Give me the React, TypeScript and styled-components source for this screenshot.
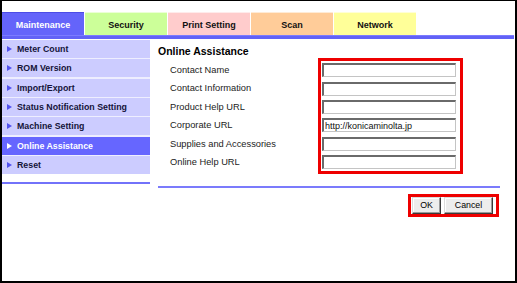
import styled, { createGlobalStyle } from 'styled-components';

const GlobalStyle = createGlobalStyle`
  html, body {
    margin: 0;
    padding: 0;
    background: #ffffff;
  }
  body {
    font-family: "Liberation Sans", Arial, sans-serif;
  }
`;

const Frame = styled.div`
  box-sizing: border-box;
  width: 517px;
  height: 283px;
  border-style: solid;
  border-color: #000;
  border-width: 1px 2px 2px 2px;
  padding: 11px 1px 0 0;
  background: #fff;
  display: flex;
  flex-direction: column;
`;

const TabRow = styled.div`
  display: flex;
  gap: 1px;
  height: 23px;
`;

const Tab = styled.div<{ $bg: string; $active?: boolean }>`
  box-sizing: border-box;
  width: 82px;
  height: 23px;
  display: flex;
  align-items: center;
  justify-content: center;
  padding-top: 1px;
  background: ${(p) => p.$bg};
  border-top: 1px solid ${(p) => (p.$active ? '#4c4ce6' : 'rgba(255,255,255,0.6)')};
  color: ${(p) => (p.$active ? '#ffffff' : '#111111')};
  font-size: 9px;
  font-weight: bold;
`;

const TabBar = styled.div`
  height: 4px;
  background: #6262f6;
  box-shadow: inset 0 1px 0 #7b7bff;
`;

const Body = styled.div`
  display: flex;
  margin-top: 1px;
`;

const SideCol = styled.div`
  width: 148px;
  display: flex;
  flex-direction: column;
`;

const Menu = styled.div`
  display: flex;
  flex-direction: column;
  gap: 1.34px;
  background: #eeeeff;
`;

const MenuItem = styled.div<{ $active?: boolean }>`
  height: 18px;
  display: flex;
  align-items: center;
  padding-left: 5px;
  background: ${(p) => (p.$active ? '#6666ff' : '#ccccff')};
  color: ${(p) => (p.$active ? '#ffffff' : '#14143a')};
  font-size: 8.8px;
  font-weight: bold;
  white-space: nowrap;
`;

const Arrow = styled.span<{ $active?: boolean }>`
  width: 0;
  height: 0;
  border-top: 3.5px solid transparent;
  border-bottom: 3.5px solid transparent;
  border-left: 5px solid ${(p) => (p.$active ? '#ffffff' : '#5252f0')};
  margin-right: 5px;
`;

const SideRule = styled.div`
  margin-top: 8px;
  height: 2px;
  background: #7272fa;
`;

const Content = styled.div`
  width: 342px;
  margin-left: 8px;
  display: flex;
  flex-direction: column;
`;

const Heading = styled.div`
  margin-top: 4px;
  line-height: 14px;
  height: 14px;
  font-size: 10.5px;
  font-weight: bold;
  color: #000;
`;

const FormRow = styled.div`
  display: flex;
  padding-left: 12px;
`;

const LabelCol = styled.div`
  width: 148px;
  padding-top: 3px;
  display: flex;
  flex-direction: column;
`;

const Label = styled.div`
  height: 18.4px;
  line-height: 18.4px;
  font-size: 9.3px;
  color: #222;
  white-space: nowrap;
`;

const FieldBox = styled.div`
  border: 3px solid #ee0000;
  padding: 0 4px 0 1px;
  display: flex;
  flex-direction: column;
`;

const FieldCell = styled.div`
  height: 18.4px;
  display: flex;
  align-items: center;
`;

const TextInput = styled.input`
  box-sizing: border-box;
  width: 134px;
  height: 14px;
  margin: 0;
  padding: 0 1px;
  border-style: solid;
  border-width: 2px 1px 1px 2px;
  border-color: #6a6a6a #c4c4c4 #c4c4c4 #6a6a6a;
  background: #fff;
  font-family: "Liberation Sans", Arial, sans-serif;
  font-size: 9px;
  color: #111;
  outline: none;
`;

const ContentRule = styled.div`
  margin-top: 11.6px;
  height: 2px;
  background: #7b7bfc;
`;

const ButtonRow = styled.div`
  display: flex;
  justify-content: flex-end;
  margin-top: 6px;
  padding-right: 1px;
`;

const ButtonBox = styled.div`
  box-sizing: border-box;
  height: 23px;
  border: 3px solid #ee0000;
  padding: 0 3px 0 1px;
  display: flex;
  align-items: center;
  gap: 3px;
`;

const Btn = styled.button<{ $w: number }>`
  box-sizing: border-box;
  width: ${(p) => p.$w}px;
  height: 17px;
  margin: 0;
  padding: 0;
  border: 1px solid;
  border-color: #dcdcdc #3a3a3a #3a3a3a #dcdcdc;
  box-shadow: inset -1px -1px 0 #9a9a9a, inset 1px 1px 0 #ffffff;
  background: #ededed;
  font-family: "Liberation Sans", Arial, sans-serif;
  font-size: 8.8px;
  color: #000;
`;

const tabs = [
  { label: 'Maintenance', bg: '#6464fa', active: true },
  { label: 'Security', bg: '#ccff99' },
  { label: 'Print Setting', bg: '#ffcccc' },
  { label: 'Scan', bg: '#ffcc99' },
  { label: 'Network', bg: '#ffff99' },
];

const menu = [
  'Meter Count',
  'ROM Version',
  'Import/Export',
  'Status Notification Setting',
  'Machine Setting',
  'Online Assistance',
  'Reset',
];

const fields = [
  { label: 'Contact Name', value: '' },
  { label: 'Contact Information', value: '' },
  { label: 'Product Help URL', value: '' },
  { label: 'Corporate URL', value: 'http://konicaminolta.jp' },
  { label: 'Supplies and Accessories', value: '' },
  { label: 'Online Help URL', value: '' },
];

export default function App() {
  return (
    <>
      <GlobalStyle />
      <Frame>
        <TabRow>
          {tabs.map((t) => (
            <Tab key={t.label} $bg={t.bg} $active={t.active}>
              {t.label}
            </Tab>
          ))}
        </TabRow>
        <TabBar />
        <Body>
          <SideCol>
            <Menu>
              {menu.map((m) => {
                const active = m === 'Online Assistance';
                return (
                  <MenuItem key={m} $active={active}>
                    <Arrow $active={active} />
                    {m}
                  </MenuItem>
                );
              })}
            </Menu>
            <SideRule />
          </SideCol>
          <Content>
            <Heading>Online Assistance</Heading>
            <FormRow>
              <LabelCol>
                {fields.map((f) => (
                  <Label key={f.label}>{f.label}</Label>
                ))}
              </LabelCol>
              <FieldBox>
                {fields.map((f) => (
                  <FieldCell key={f.label}>
                    <TextInput type="text" defaultValue={f.value} />
                  </FieldCell>
                ))}
              </FieldBox>
            </FormRow>
            <ContentRule />
            <ButtonRow>
              <ButtonBox>
                <Btn $w={29}>OK</Btn>
                <Btn $w={49}>Cancel</Btn>
              </ButtonBox>
            </ButtonRow>
          </Content>
        </Body>
      </Frame>
    </>
  );
}
